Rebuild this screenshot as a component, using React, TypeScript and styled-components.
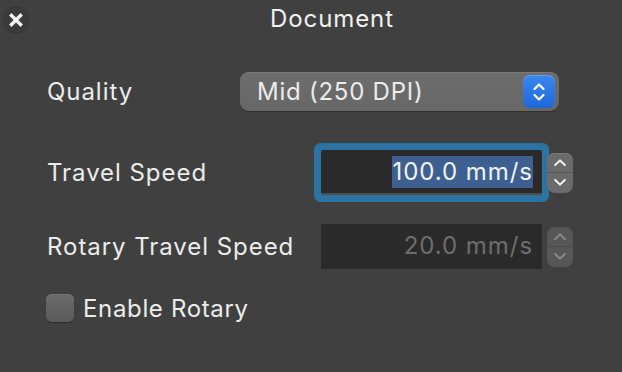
import React from "react";
import styled, { createGlobalStyle } from "styled-components";

const GlobalStyle = createGlobalStyle`
  html, body { margin: 0; padding: 0; background: #404040; }
  body { font-family: Inter, "Noto Sans", "Liberation Sans", sans-serif; -webkit-font-smoothing: antialiased; }
  * { box-sizing: border-box; }
`;

const Window = styled.div`
  width: 622px;
  height: 372px;
  background: #404040;
  color: #ececec;
  overflow: hidden;
  display: flex;
  flex-direction: column;
`;

const TitleBar = styled.div`
  height: 37px;
  display: flex;
  align-items: center;
  padding-left: 1px;
`;

const CloseButton = styled.button`
  width: 30px;
  height: 30px;
  padding: 0;
  border: 0;
  background: transparent;
  display: flex;
  align-items: center;
  justify-content: center;
  margin-top: 2px;
`;

const Title = styled.div`
  flex: 1;
  text-align: center;
  padding-left: 11px;
  font-size: 24px;
  letter-spacing: 0.9px;
  font-weight: 400;
  color: #f0f0f0;
`;

const Form = styled.div`
  display: flex;
  flex-direction: column;
  padding: 0 49px 0 47px;
`;

const Row = styled.div<{ $top: number; $h: number }>`
  display: flex;
  align-items: center;
  margin-top: ${(p) => p.$top}px;
  height: ${(p) => p.$h}px;
`;

const Label = styled.div`
  flex: 1;
  font-size: 24px;
  letter-spacing: 0.95px;
  color: #ececec;
  white-space: nowrap;
`;

const Select = styled.div`
  width: 319px;
  height: 39px;
  margin-right: 14px;
  border-radius: 9px;
  background: linear-gradient(#6d6d6d, #676767);
  box-shadow: inset 0 1px 0 #7b7b7b, 0 1px 1px rgba(0, 0, 0, 0.25);
  display: flex;
  align-items: center;
  padding: 0 4px 0 17px;
`;

const SelectText = styled.span`
  flex: 1;
  font-size: 24px;
  letter-spacing: 0.75px;
  color: #ececec;
`;

const SelectArrows = styled.div`
  width: 32px;
  height: 33px;
  border-radius: 7px;
  background: linear-gradient(#3a87f0, #1e69d8);
  box-shadow: inset 0 1px 0 rgba(255, 255, 255, 0.2);
  display: flex;
  align-items: center;
  justify-content: center;
`;

const FieldGroup = styled.div`
  display: flex;
  align-items: center;
  gap: 5px;
`;

const Field = styled.div<{ $focused?: boolean; $disabled?: boolean }>`
  width: 221px;
  height: 45px;
  background: #2a2a2a;
  border-bottom: 2px solid ${(p) => (p.$focused ? "#4c4c4c" : "#2a2a2a")};
  border-radius: ${(p) => (p.$focused ? "2px" : "0")};
  box-shadow: ${(p) => (p.$focused ? "0 0 0 7px #2c72a2" : "none")};
  display: flex;
  align-items: center;
  justify-content: flex-end;
  padding-right: 9px;
  font-size: 24px;
  letter-spacing: 0.95px;
  color: ${(p) => (p.$disabled ? "#6e6e6e" : "#f2f2f2")};
  white-space: nowrap;
`;

const Selection = styled.span`
  background: #3e6090;
  line-height: 32px;
  padding: 0 0 0 1px;
`;

const Stepper = styled.div<{ $disabled?: boolean }>`
  width: 26px;
  height: 40px;
  border-radius: 8px;
  background: ${(p) => (p.$disabled ? "#575757" : "#6b6b6b")};
  box-shadow: ${(p) => (p.$disabled ? "none" : "inset 0 1px 0 #7a7a7a")};
  display: flex;
  flex-direction: column;
  overflow: hidden;
`;

const StepHalf = styled.div<{ $disabled?: boolean; $bottom?: boolean }>`
  flex: 1;
  display: flex;
  align-items: center;
  justify-content: center;
  border-top: ${(p) => (p.$bottom ? `1px solid ${p.$disabled ? "#4a4a4a" : "#565656"}` : "0")};
  color: ${(p) => (p.$disabled ? "#8a8a8a" : "#f4f4f4")};
`;

const CheckRow = styled.label`
  display: flex;
  align-items: center;
  gap: 9px;
  margin-left: -1px;
`;

const CheckBox = styled.span`
  width: 28px;
  height: 28px;
  border-radius: 6px;
  background: linear-gradient(#6a6a6a, #5b5b5b);
  box-shadow: inset 0 1px 0 #747474, 0 1px 1px rgba(0, 0, 0, 0.3);
`;

const CheckText = styled.span`
  font-size: 24px;
  letter-spacing: 0.65px;
  color: #ececec;
`;

const Chevron = ({ up, w = 12, h = 7 }: { up?: boolean; w?: number; h?: number }) => (
  <svg width={w} height={h} viewBox="0 0 12 7" fill="none">
    <path
      d={up ? "M1.2 6 L6 1.4 L10.8 6" : "M1.2 1 L6 5.6 L10.8 1"}
      stroke="currentColor"
      strokeWidth="2"
      strokeLinecap="round"
      strokeLinejoin="round"
    />
  </svg>
);

const StepperControl = ({ disabled }: { disabled?: boolean }) => (
  <Stepper $disabled={disabled}>
    <StepHalf $disabled={disabled}>
      <Chevron up />
    </StepHalf>
    <StepHalf $disabled={disabled} $bottom>
      <Chevron />
    </StepHalf>
  </Stepper>
);

export default function App() {
  return (
    <>
      <GlobalStyle />
      <Window>
        <TitleBar>
          <CloseButton aria-label="Close">
            <svg width="30" height="30" viewBox="0 0 30 30">
              <circle cx="15" cy="15" r="13" fill="#3b3b3b" stroke="#373737" strokeWidth="1" />
              <path d="M10.5 10.5 L19.5 19.5 M19.5 10.5 L10.5 19.5" stroke="#f4f4f4" strokeWidth="3.4" strokeLinecap="square" />
            </svg>
          </CloseButton>
          <Title>Document</Title>
        </TitleBar>
        <Form>
          <Row $top={35} $h={39}>
            <Label>Quality</Label>
            <Select>
              <SelectText>Mid (250 DPI)</SelectText>
              <SelectArrows>
                <svg width="14" height="22" viewBox="0 0 14 22" fill="none">
                  <path d="M2.5 8 L7 3.5 L11.5 8" stroke="#fff" strokeWidth="2.2" strokeLinecap="round" strokeLinejoin="round" />
                  <path d="M2.5 14 L7 18.5 L11.5 14" stroke="#fff" strokeWidth="2.2" strokeLinecap="round" strokeLinejoin="round" />
                </svg>
              </SelectArrows>
            </Select>
          </Row>
          <Row $top={39} $h={45}>
            <Label>Travel Speed</Label>
            <FieldGroup>
              <Field $focused>
                <Selection>100.0 mm/s</Selection>
              </Field>
              <StepperControl />
            </FieldGroup>
          </Row>
          <Row $top={29} $h={45}>
            <Label>Rotary Travel Speed</Label>
            <FieldGroup>
              <Field $disabled>20.0 mm/s</Field>
              <StepperControl disabled />
            </FieldGroup>
          </Row>
          <Row $top={25} $h={28}>
            <CheckRow>
              <CheckBox />
              <CheckText>Enable Rotary</CheckText>
            </CheckRow>
          </Row>
        </Form>
      </Window>
    </>
  );
}
